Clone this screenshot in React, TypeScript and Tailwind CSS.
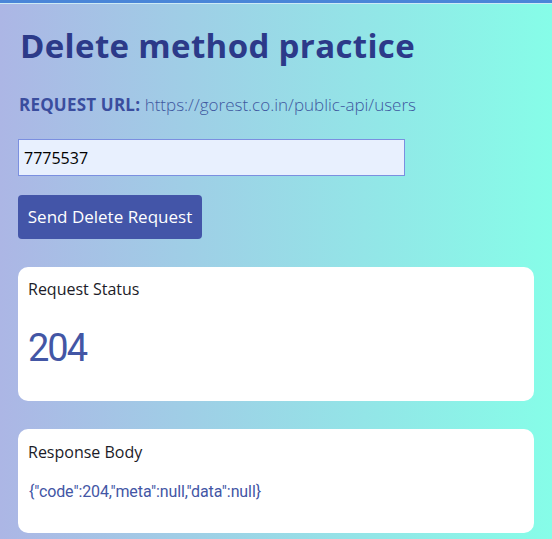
import React from "react";

export default function App() {
  return (
    <div className="min-h-[539px] w-full border-t-[3px] border-[#4a86d8] bg-[linear-gradient(to_right,#acb6e5,#86fde8)] font-['Open_Sans','Noto_Sans',sans-serif]">
      <div className="h-px bg-[#cdeaf5]" />
      <div className="px-[18px] pb-[6px]">
        <h1 className="mt-[23px] pl-[2px] text-[33px] font-bold leading-[38px] tracking-[0.35px] text-[#2c3a89]">
          Delete method practice
        </h1>
        <p className="mt-[28px] pl-[1px] text-[17px] leading-[24px] text-[#3a4d9e]">
          <span className="font-bold tracking-[0.2px]">REQUEST URL:</span>{" "}
          <span className="font-light text-[#3e58a0]">https://gorest.co.in/public-api/users</span>
        </p>
        <input
          readOnly
          value="7775537"
          className="mt-[22px] block h-[37px] w-[387px] border border-[#7b8fe0] bg-[#e8f0fe] px-[5px] text-[16px] text-black outline-none"
        />
        <button className="mt-[19px] block h-[44px] w-[184px] rounded-[4px] bg-[#4355a8] text-[17px] text-white">
          Send Delete Request
        </button>
        <div className="mt-[28px] flex h-[134px] w-[516px] flex-col rounded-[10px] bg-white px-[10px] pt-[10px]">
          <div className="text-[16px] leading-[24px] text-[#1c1c28]">Request Status</div>
          <div className="mt-[25px] font-['Roboto',sans-serif] text-[38px] leading-[44px] tracking-[-2px] text-[#4356a5]">
            204
          </div>
        </div>
        <div className="mt-[28px] flex h-[104px] w-[516px] flex-col rounded-[10px] bg-white px-[10px] pt-[11px]">
          <div className="text-[16px] leading-[24px] text-[#1c1c28]">Response Body</div>
          <div className="mt-[18px] pl-[1px] font-['Roboto',sans-serif] text-[16px] leading-[20px] tracking-[-0.1px] text-[#4356a5]">
            {'{"code":204,"meta":null,"data":null}'}
          </div>
        </div>
      </div>
    </div>
  );
}
